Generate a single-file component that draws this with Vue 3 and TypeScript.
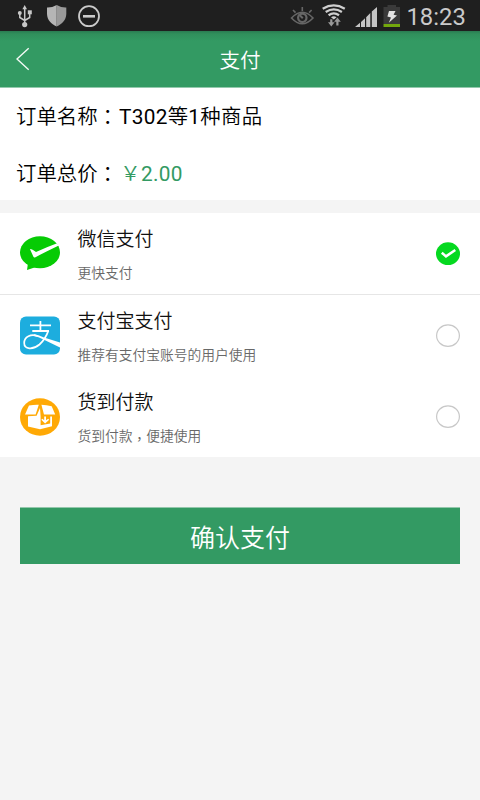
<script setup lang="ts">
import { ref } from 'vue'

type MethodId = 'wechat' | 'alipay' | 'cod'

interface PayMethod {
  id: MethodId
  name: string
  hint: string
}

const methods: PayMethod[] = [
  { id: 'wechat', name: '微信支付', hint: '更快支付' },
  { id: 'alipay', name: '支付宝支付', hint: '推荐有支付宝账号的用户使用' },
  { id: 'cod', name: '货到付款', hint: '货到付款，便捷使用' },
]

const selected = ref<MethodId>('wechat')

// Keeps the comma as its own piece so it can sit lower on the line.
const pieces = (text: string): string[] => text.split(/(，)/)
</script>

<template>
  <div class="screen">
    <div class="status">
      <svg class="status-left" width="110" height="31" viewBox="0 0 110 31">
        <g stroke="#c8c8c8" fill="none" stroke-width="1.5">
          <path d="M24.7 9V24M19.8 14V17.5L24.7 20.5L29.7 17.5V12" />
        </g>
        <g fill="#c8c8c8">
          <path d="M24.7 5L27 9.3H22.4Z" />
          <circle cx="19.8" cy="13" r="2" />
          <rect x="27.8" y="10.3" width="4" height="4" />
          <circle cx="24.7" cy="24.6" r="2.6" />
        </g>
        <path d="M56.7 5Q52 7.8 47 7.6V14C47.3 20 51 24 56.7 26.5Z" fill="#b5b5b5" />
        <path d="M56.7 5Q61.4 7.8 66.3 7.6V14C66 20 62.3 24 56.7 26.5Z" fill="#999" />
        <circle cx="89" cy="16.2" r="10" fill="none" stroke="#cbcbcb" stroke-width="1.8" />
        <rect x="83" y="15" width="12" height="2.6" fill="#cbcbcb" />
      </svg>
      <svg class="status-right" width="116" height="31" viewBox="288 0 116 31">
        <g fill="none" stroke="#666" stroke-width="1.6">
          <path d="M291.5 18Q302.3 6.5 313 18Q302.3 29.5 291.5 18Z" />
          <path d="M293 10L295.5 12.6M302.3 7V11M311.6 10L309.1 12.6" />
          <circle cx="302.3" cy="17.8" r="4.2" stroke-width="2.2" />
          <path d="M299.5 15L302.8 18.3" stroke-width="2" />
        </g>
        <g fill="none" stroke="#cfcfcf" stroke-width="2.3">
          <path d="M322.7 8.7Q333.8 2.2 344.8 8.7" />
          <path d="M325.7 12Q333.8 6.8 341.9 12" />
          <path d="M328.6 15.2Q333.8 11.6 339 15.2" />
        </g>
        <path d="M331 17.3Q333.8 15 336.6 17.3L333.8 19.6Z" fill="#cfcfcf" />
        <path d="M330.2 19.3H332.4V22.3H334.6L331.3 26.6L328 22.3H330.2Z" fill="#999" />
        <path d="M336.3 25.5H338.5V21.8H340.8L337.4 17.4L334.1 21.8H336.3Z" fill="#999" />
        <path
          d="M355 27L360 22.7V27ZM361 22L365 18.3V27H361ZM366.2 17.2L370.3 13V27H366.2ZM371.8 11.5L377 7V27H371.8Z"
          fill="#c5c5c5"
        />
        <path d="M383.5 7H387.5V5H396V7H400V24H383.5Z" fill="#3a3a3a" />
        <rect x="383.5" y="24" width="16.5" height="3" fill="#73a80d" />
        <path d="M389 11H395.5L393.6 14.8L397 15.6L388.8 22.8L391 17.6L387.4 16.5Z" fill="#e4e4e4" />
      </svg>
      <span class="clock">18:23</span>
    </div>

    <header class="header">
      <svg class="back" width="14" height="24" viewBox="0 0 14 24">
        <path d="M12.7 1.3L1 12L12.7 22.7" fill="none" stroke="#f4faf6" stroke-width="1.4" />
      </svg>
      <h1>支付</h1>
    </header>

    <section class="order">
      <p>订单名称<span class="mid">：</span><span class="value"><span class="latin">T302</span>等<span class="latin">1</span>种商品</span></p>
      <p>订单总价<span class="mid">：</span><span class="value price">￥<span class="latin">2.00</span></span></p>
    </section>

    <section class="methods">
      <div v-for="m in methods" :key="m.id" class="method" :class="m.id" @click="selected = m.id">
        <svg v-if="m.id === 'wechat'" class="logo" width="40" height="40" viewBox="0 0 40 40">
          <ellipse cx="20" cy="18.3" rx="20" ry="16" fill="#06cb04" />
          <path d="M8 29L7 36L16 33Z" fill="#06cb04" />
          <path d="M10 15.2Q11.3 14.6 16 18Q27 12.8 36.5 9.4L38.8 11.4Q27 17 15 23.4Q14 23.8 13.4 22.7Z" fill="#fff" />
        </svg>
        <svg v-else-if="m.id === 'alipay'" class="logo" width="40" height="40" viewBox="0 0 40 40">
          <rect x="0" y="0.4" width="40" height="38" rx="6" fill="#1dadde" />
          <g fill="none" stroke="#fff">
            <path d="M10 9.4H31M12.3 15H29M20.4 5V15" stroke-width="1.8" />
            <path d="M28.4 14.6Q25.5 23 19.5 28.5C13 34 4.2 33.6 4.2 27C4.2 20.5 11 17.8 17.5 20" stroke-width="1.7" />
          </g>
          <path d="M14 18.3Q18 18.8 24 21.5L40 26.6V31.4L24 23.8Q18 20.8 14 20Z" fill="#fff" />
        </svg>
        <svg v-else class="logo" width="40" height="40" viewBox="0 0 40 40">
          <ellipse cx="20" cy="20" rx="20" ry="18.8" fill="#ffa905" />
          <path d="M9 8.6Q14 7.6 18.8 7.8L15.6 17.6L5 17.6Z" fill="#fff" />
          <path d="M21.4 7.8Q26.5 7.9 31.7 9.2L35.2 17.6L24 17.4Z" fill="#fff" />
          <path d="M8 19.2L16.6 18.8L20 11L20.6 19.5V28.2L30.2 26.4V19.4H32V29.2L20 32.2L8 29.6Z" fill="#fff" />
          <path d="M24.2 19.4H26V23.2L28.2 21.8L29.2 22.8L25.1 26.6L21.3 22.8L22.3 21.8L24.2 23.2Z" fill="#fff" />
        </svg>
        <div class="words">
          <div class="name">{{ m.name }}</div>
          <div class="hint"><span v-for="(part, i) in pieces(m.hint)" :key="i" :class="{ comma: part === '，' }">{{ part }}</span></div>
        </div>
        <svg class="radio" width="24" height="24" viewBox="0 0 24 24">
          <template v-if="selected === m.id">
            <ellipse cx="12" cy="11.7" rx="12" ry="11.4" fill="#05d920" />
            <path d="M5.8 10.7L10 14.4L19.3 8" fill="none" stroke="#fff" stroke-width="2.5" />
          </template>
          <ellipse v-else cx="12" cy="11.6" rx="11.4" ry="10.8" fill="#fff" stroke="#c8c8c8" stroke-width="1.2" />
        </svg>
      </div>
    </section>

    <button class="confirm">确认支付</button>
  </div>
</template>

<style>
body {
  background: #f4f4f4;
}
</style>

<style scoped>
.screen {
  box-sizing: border-box;
  width: 480px;
  height: 800px;
  overflow: hidden;
  background: #f4f4f4;
  font-family: Roboto, 'Noto Sans CJK SC', sans-serif;
  color: #000;
}
.status {
  display: flex;
  height: 31px;
  background: #1f1f1f;
}
.status-right {
  margin-left: 178px;
}
.clock {
  margin-left: 2.5px;
  font-size: 23.8px;
  line-height: 35px;
  color: #cacaca;
  white-space: nowrap;
}
.header {
  display: grid;
  grid-template-columns: 48px 1fr 48px;
  align-items: center;
  box-sizing: border-box;
  height: 57px;
  border-bottom: 1px solid #94c9ad;
  background: linear-gradient(#2a7c51, #30905c 3px, #339a63 10px);
}
.back {
  margin-left: 16px;
}
h1 {
  margin: 0;
  color: #fff;
  font-family: 'Noto Sans CJK SC', sans-serif;
  font-size: 20.6px;
  font-weight: 350;
  line-height: 54px;
  text-align: center;
}
.order {
  height: 112px;
  padding-left: 16px;
  background: #fff;
}
.order p {
  margin: 0;
  height: 57px;
  font-size: 20.4px;
  font-weight: 350;
  line-height: 58px;
  white-space: nowrap;
}
.mid {
  font-family: 'Noto Sans CJK TC', sans-serif;
  line-height: 1;
  vertical-align: -1px;
}
.value {
  margin-left: 1px;
  letter-spacing: 0.3px;
}
.latin {
  font-size: 20.8px;
  font-weight: 400;
  line-height: 1;
}
.price {
  margin-left: 2.4px;
  color: #339a63;
}
.methods {
  margin-top: 13px;
  background: #fff;
}
.method {
  display: flex;
  align-items: center;
  box-sizing: border-box;
  height: 81.2px;
  padding: 0 20px;
}
.method.wechat {
  height: 82px;
  border-bottom: 1px solid #e6e6e6;
}
.words {
  flex: 1;
  margin-left: 17.5px;
}
.name {
  font-family: 'Noto Sans CJK SC', sans-serif;
  font-size: 19px;
  font-weight: 350;
  line-height: 32px;
  color: #111;
}
.hint {
  margin-top: 6px;
  font-size: 13.75px;
  font-weight: 350;
  line-height: 26px;
  color: #686868;
}
.comma {
  font-family: 'Noto Sans CJK TC', sans-serif;
  line-height: 1;
  vertical-align: -3px;
}
.confirm {
  display: block;
  box-sizing: border-box;
  width: 440px;
  height: 57px;
  margin: 49.6px 20px 0;
  padding: 0;
  border: 0;
  border-top: 1px solid #93c7ab;
  background: #339a63;
  color: #fff;
  font-family: 'Noto Sans CJK SC', sans-serif;
  font-size: 25px;
  font-weight: 350;
  line-height: 52px;
}
</style>
